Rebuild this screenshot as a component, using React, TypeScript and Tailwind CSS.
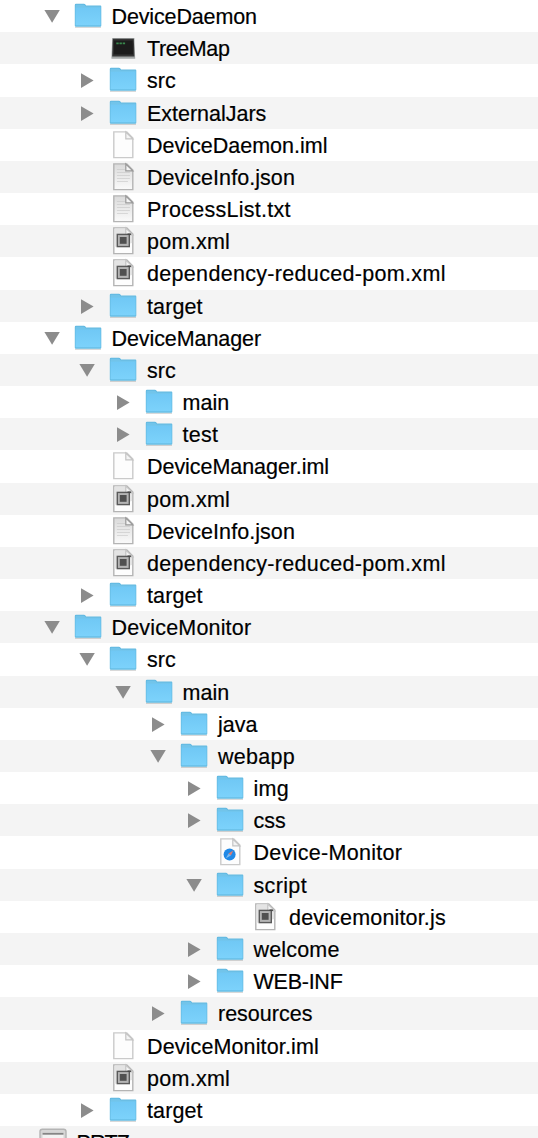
import React from 'react';

type Kind = 'folder' | 'terminal' | 'blank' | 'text' | 'code' | 'web' | 'disk';
type Arrow = 'open' | 'closed' | null;
type Row = [level: number, arrow: Arrow, kind: Kind, label: string, tracking: string];

const rows: Row[] = [
  [1, 'open', 'folder', 'DeviceDaemon', 'tracking-[-0.14px]'],
  [2, null, 'terminal', 'TreeMap', 'tracking-[-0.4px]'],
  [2, 'closed', 'folder', 'src', 'tracking-[0.05px]'],
  [2, 'closed', 'folder', 'ExternalJars', 'tracking-[-0.02px]'],
  [2, null, 'blank', 'DeviceDaemon.iml', 'tracking-[0px]'],
  [2, null, 'text', 'DeviceInfo.json', 'tracking-[0.06px]'],
  [2, null, 'text', 'ProcessList.txt', 'tracking-[0.26px]'],
  [2, null, 'code', 'pom.xml', 'tracking-[0.27px]'],
  [2, null, 'code', 'dependency-reduced-pom.xml', 'tracking-[0.32px]'],
  [2, 'closed', 'folder', 'target', 'tracking-[0.1px]'],
  [1, 'open', 'folder', 'DeviceManager', 'tracking-[-0.08px]'],
  [2, 'open', 'folder', 'src', 'tracking-[0.05px]'],
  [3, 'closed', 'folder', 'main', 'tracking-[0.03px]'],
  [3, 'closed', 'folder', 'test', 'tracking-[0.3px]'],
  [2, null, 'blank', 'DeviceManager.iml', 'tracking-[-0.05px]'],
  [2, null, 'code', 'pom.xml', 'tracking-[0.27px]'],
  [2, null, 'text', 'DeviceInfo.json', 'tracking-[0.06px]'],
  [2, null, 'code', 'dependency-reduced-pom.xml', 'tracking-[0.32px]'],
  [2, 'closed', 'folder', 'target', 'tracking-[0.1px]'],
  [1, 'open', 'folder', 'DeviceMonitor', 'tracking-[0.18px]'],
  [2, 'open', 'folder', 'src', 'tracking-[0.05px]'],
  [3, 'open', 'folder', 'main', 'tracking-[0.03px]'],
  [4, 'closed', 'folder', 'java', 'tracking-[0.03px]'],
  [4, 'open', 'folder', 'webapp', 'tracking-[0.28px]'],
  [5, 'closed', 'folder', 'img', 'tracking-[0.3px]'],
  [5, 'closed', 'folder', 'css', 'tracking-[0.03px]'],
  [5, null, 'web', 'Device-Monitor', 'tracking-[0.3px]'],
  [5, 'open', 'folder', 'script', 'tracking-[0.35px]'],
  [6, null, 'code', 'devicemonitor.js', 'tracking-[0.17px]'],
  [5, 'closed', 'folder', 'welcome', 'tracking-[0.17px]'],
  [5, 'closed', 'folder', 'WEB-INF', 'tracking-[-0.25px]'],
  [4, 'closed', 'folder', 'resources', 'tracking-[0px]'],
  [2, null, 'blank', 'DeviceMonitor.iml', 'tracking-[0.13px]'],
  [2, null, 'code', 'pom.xml', 'tracking-[0.27px]'],
  [2, 'closed', 'folder', 'target', 'tracking-[0.1px]'],
  [0, null, 'disk', 'PRTZ', 'tracking-[-0.8px]'],
];

const indents = ['w-[38.5px]', 'w-[35.5px]', 'w-[71px]', 'w-[106.5px]', 'w-[142px]', 'w-[177.5px]', 'w-[213px]'];

function Disclosure({ state }: { state: Arrow }) {
  return (
    <svg viewBox="0 0 32 32" className="mr-1.5 size-8 shrink-0">
      {state === 'open' && <path d="M8.4 10H23.8L16.1 22.8Z" fill="#8c8c8c" />}
      {state === 'closed' && <path d="M10 9.2V24L22.6 16.6Z" fill="#8c8c8c" />}
    </svg>
  );
}

function Page({ kind }: { kind: Kind }) {
  const lined = kind === 'text';
  const pale = kind === 'blank' || kind === 'web';
  return (
    <g transform="translate(0.9 0)">
      <path d="M3.9 2.9H16.9L22.9 9V28.6H3.9Z" fill={lined ? 'url(#paper)' : '#fdfdfd'} stroke={pale ? '#cacaca' : '#b4b4b4'} strokeWidth="1.4" />
      {kind === 'code' && <path d="M4.6 3.6H17V9.5H22.2V18L4.6 22Z" fill="#e4e4e4" />}
      {lined && <path d="M7 8.5H15M7 11.5H20M7 14.5H20M7 17.5H20M7 20.5H18" stroke="#c6c6c6" strokeOpacity="0.6" strokeWidth="1" />}
      <path d="M15.9 3V9.8H22.9Z" fill="#f4f4f4" stroke={lined ? '#999999' : '#c4c4c4'} strokeWidth="1.2" />
      {kind === 'code' && (
        <>
          <rect x="7.4" y="9.4" width="12" height="12.2" fill="#b4b4b4" stroke="#5a5a5a" strokeWidth="1.4" />
          <rect x="9.9" y="12" width="6.8" height="6.8" fill="#505050" />
          <path d="M17.6 9.2H21.2" stroke="#4a4a4a" strokeWidth="1.5" />
        </>
      )}
      {kind === 'web' && (
        <>
          <circle cx="12.7" cy="18.4" r="6" fill="#2189e6" />
          <path d="M16.4 14.4L14 19.4L11.6 17.4Z" fill="#e07a70" />
          <path d="M9 22.2L11.6 17.4L14 19.4Z" fill="#7dbaf0" />
        </>
      )}
    </g>
  );
}

function Icon({ kind }: { kind: Kind }) {
  return (
    <svg viewBox="0 0 28 32" className="h-8 w-7 shrink-0">
      <defs>
        <linearGradient id="blue" x1="0" y1="0" x2="0" y2="1">
          <stop stopColor="#70c8f5" />
          <stop offset="1" stopColor="#7cd2fb" />
        </linearGradient>
        <linearGradient id="paper" x1="0" y1="0" x2="0" y2="1">
          <stop stopColor="#dadada" />
          <stop offset="1" stopColor="#fafafa" />
        </linearGradient>
      </defs>
      {kind === 'folder' && (
        <g>
          <path d="M1 27.4H27" stroke="#000" strokeOpacity="0.15" strokeWidth="1.2" />
          <path d="M0.8 25.4V5Q0.8 3.8 2 3.8H9.8Q11 3.8 11.6 4.8L12.1 5.5H26.4Q27.3 5.5 27.3 6.4V25.6Q27.3 26.8 26.2 26.8H1.9Q0.8 26.8 0.8 25.4Z" fill="#62b9e0" />
          <path d="M1.6 4.8H10.3L11.8 6.4H26.6V8H1.6Z" fill="#72c4ea" />
          <path d="M1.5 7.6H26.6V25.4H1.5Z" fill="url(#blue)" />
        </g>
      )}
      {kind === 'terminal' && (
        <g>
          <path d="M3.2 6H25.4L26.2 26.8H2.4Z" fill="#a3a7a7" />
          <path d="M3.8 6.8H24.8L25.4 24.4H3.2Z" fill="#343434" />
          <path d="M4.9 8.4H23.7L24 22.6H4.7Z" fill="#1c1c1c" />
          <path d="M7.3 11.4H16.3" stroke="#39884c" strokeWidth="1.7" strokeDasharray="2.4 0.8" />
        </g>
      )}
      {kind === 'disk' && (
        <g>
          <rect x="1" y="3.2" width="26" height="27" rx="2.4" fill="#d6d6d6" stroke="#b4b4b4" strokeWidth="1.4" />
          <path d="M3.5 7H24.5V14H3.5Z" fill="#f2f2f2" />
          <path d="M3.5 7.8H24.5" stroke="#858585" strokeWidth="1.8" />
        </g>
      )}
      {kind !== 'folder' && kind !== 'terminal' && kind !== 'disk' && <Page kind={kind} />}
    </svg>
  );
}

export default function App() {
  return (
    <main className="h-[1138px] w-[538px] overflow-hidden bg-white font-['Liberation_Sans',Arial,sans-serif] text-[21.5px] text-black">
      {rows.map(([level, arrow, kind, label, tracking], i) => (
        <div key={i} className="flex h-[32.18px] items-start even:bg-[#f4f4f4]">
          <div className={`shrink-0 ${indents[level]}`} />
          {level > 0 && <Disclosure state={arrow} />}
          <Icon kind={kind} />
          <span className={`ml-[10px] whitespace-nowrap leading-[34px] [-webkit-text-stroke:0.2px_black] ${tracking}`}>{label}</span>
        </div>
      ))}
    </main>
  );
}
